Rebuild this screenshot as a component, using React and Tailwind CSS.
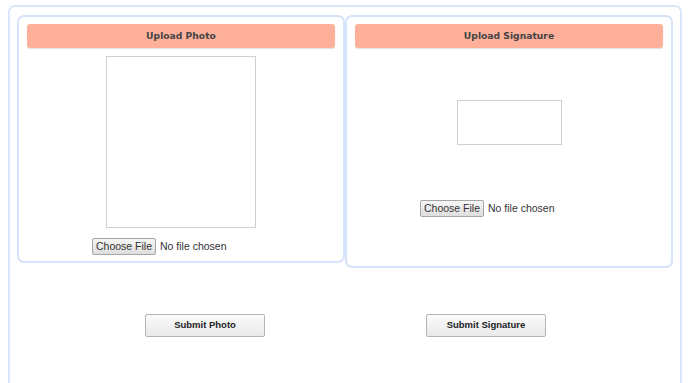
import React from 'react'

const font = { fontFamily: '"Liberation Sans", Arial, sans-serif' }

function FileInput() {
  return (
    <div className="mx-auto flex h-[17px] w-[178px] items-center whitespace-nowrap" style={font}>
      <span className="flex h-[17px] w-[64px] items-center justify-center rounded-[2px] border border-[#a6a6a6] bg-gradient-to-b from-[#f6f6f6] to-[#dedede] text-[10.5px] leading-none text-[#333]">
        Choose File
      </span>
      <span className="ml-[4px] text-[10.5px] leading-none text-[#333]">No file chosen</span>
    </div>
  )
}

function Header({ title }) {
  return (
    <div
      className="flex h-[24px] items-center justify-center rounded-[3px] bg-[#ffb09a] text-[9.2px] font-bold text-[#444] shadow-[0_1px_1px_rgba(0,0,0,0.12)]"
      style={{ fontFamily: '"DejaVu Sans", Verdana, sans-serif' }}
    >
      {title}
    </div>
  )
}

function SubmitButton({ label, className = '' }) {
  return (
    <button
      className={`flex h-[23px] w-[120px] items-center justify-center whitespace-nowrap rounded-[2px] border border-[#b4b4b4] bg-gradient-to-b from-[#fbfbfb] to-[#e9e9e9] text-[9.5px] font-bold text-[#222] ${className}`}
      style={font}
    >
      {label}
    </button>
  )
}

export default function App() {
  return (
    <div className="h-[383px] overflow-hidden bg-white pl-[8px] pt-[5px]">
      <div className="h-[400px] w-[674px] rounded-[7px] border-2 border-[#dbe6fb] px-[7px] pt-[8px]">
        <div className="flex items-start">
          {/* Photo */}
          <div className="h-[248px] w-[328px] rounded-[7px] border-2 border-[#d6e3fa] px-[8px] pt-[7px]">
            <Header title="Upload Photo" />
            <div className="mx-auto mt-[8px] h-[172px] w-[150px] border border-[#cfcfcf]" />
            <div className="mt-[10px]">
              <FileInput />
            </div>
          </div>

          {/* Signature */}
          <div className="h-[253px] w-[328px] rounded-[7px] border-2 border-[#d6e3fa] px-[8px] pt-[7px]">
            <Header title="Upload Signature" />
            <div className="mx-auto mt-[52px] h-[45px] w-[105px] border border-[#cfcfcf]" />
            <div className="mt-[55px]">
              <FileInput />
            </div>
          </div>
        </div>

        <div className="mt-[46px] flex">
          <SubmitButton label="Submit Photo" className="ml-[128px]" />
          <SubmitButton label="Submit Signature" className="ml-[161px]" />
        </div>
      </div>
    </div>
  )
}
